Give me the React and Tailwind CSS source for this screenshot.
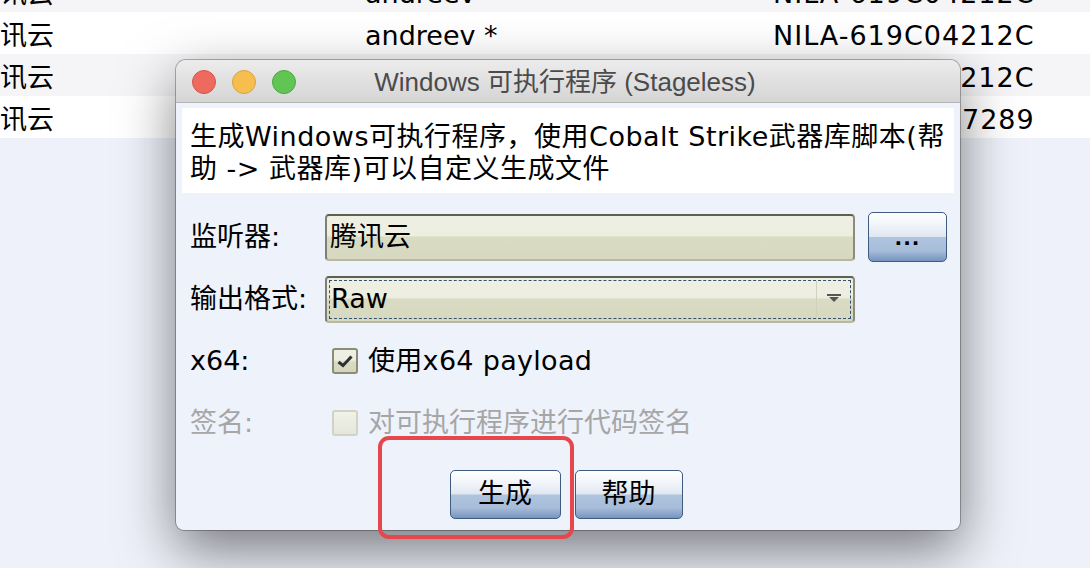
import React from 'react';

const FONT = { fontFamily: '"DejaVu Sans", "Noto Sans CJK SC", sans-serif' };
const TITLE_FONT = { fontFamily: '"Liberation Sans", "Noto Sans CJK SC", sans-serif' };

const rows = [
  { name: '腾讯云', user: 'andreev', host: 'NILA-619C04212C', bg: 'bg-[#f5f5f7]' },
  { name: '腾讯云', user: 'andreev *', host: 'NILA-619C04212C', bg: 'bg-white' },
  { name: '腾讯云', user: 'andreev', host: 'NILA-619C04212C', bg: 'bg-[#f5f5f7]' },
  { name: '腾讯云', user: 'andreev', host: 'DESKTOP-GM7289', bg: 'bg-white' },
];

const fieldBg =
  'bg-[linear-gradient(to_bottom,#eff0e4_0%,#eceee0_45%,#d9dbc3_50%,#d6d8bf_100%)]';
const fieldBorder =
  'border-2 border-t-[#5d604f] border-l-[#7d8070] border-r-[#8a8d7c] border-b-[#b6b8a4] rounded-[4px]';
const blueBtn =
  'border border-[#3f5b80] rounded-[5px] bg-[linear-gradient(to_bottom,#ffffff_0%,#eef2f8_30%,#dfe7f1_49%,#afc4dd_51%,#a7bdd9_78%,#7595bf_100%)]';

const Check = ({ checked, disabled }) => (
  <div
    className={`w-[26px] h-[26px] rounded-[3px] border-2 flex items-center justify-center ${
      disabled
        ? 'border-[#d2d3c6] bg-[linear-gradient(to_bottom,#f1f2e8,#e6e7da)]'
        : 'border-[#8b8d79] bg-[linear-gradient(to_bottom,#eff0e4_0%,#eceee0_45%,#d9dbc3_55%,#d3d5bc_100%)]'
    }`}
  >
    {checked && (
      <svg width="18" height="16" viewBox="0 0 18 16">
        <path d="M2.5 9 L7 12.5 L15.5 3.5" fill="none" stroke="#2f2f2f" strokeWidth="3" />
      </svg>
    )}
  </div>
);

export default function App() {
  return (
    <div className="relative w-[1090px] h-[568px] overflow-hidden bg-[#eef1f9] text-black" style={FONT}>
      {/* table behind */}
      <div className="-mt-[30px]">
        {rows.map((r, i) => (
          <div key={i} className={`h-[42px] flex items-center pt-[7px] text-[27px] whitespace-nowrap ${r.bg}`}>
            <div className="w-[365px] -ml-[27px] shrink-0">{r.name}</div>
            <div className="w-[408px] pl-[27px] shrink-0">{r.user}</div>
            <div className="pl-[27px] tracking-[1px]">{r.host}</div>
          </div>
        ))}
      </div>

      {/* dialog window */}
      <div className="absolute left-[176px] top-[60px] w-[784px] h-[470px] rounded-[10px] rounded-b-[8px] bg-[#eef2fb] shadow-[0_20px_55px_rgba(0,0,0,0.5),0_0_0_1px_rgba(0,0,0,0.28)] flex flex-col overflow-hidden">
        <div className="h-[43px] shrink-0 relative flex items-center justify-center border-b border-[#b4b4b4] bg-[linear-gradient(to_bottom,#ececec,#d5d5d5)]">
          <div className="absolute left-[16px] top-[10px] flex gap-[16px]">
            <span className="w-[24px] h-[24px] rounded-full bg-[#ee6a5f] border border-[#d4544a]" />
            <span className="w-[24px] h-[24px] rounded-full bg-[#f6be4f] border border-[#d9a13b]" />
            <span className="w-[24px] h-[24px] rounded-full bg-[#61c554] border border-[#4ca740]" />
          </div>
          <div className="text-[26px] text-[#4b4b4b] pt-[3px] ml-[-6px]" style={TITLE_FONT}>
            Windows 可执行程序 (Stageless)
          </div>
        </div>

        <div className="flex-1 px-[6px] pt-[5px] flex flex-col">
          <div className="bg-white h-[85px] px-[8px] pt-[13px] text-[27px] leading-[32px] tracking-[0.5px] whitespace-nowrap">
            生成Windows可执行程序，使用Cobalt Strike武器库脚本(帮
            <br />
            助 -&gt; 武器库)可以自定义生成文件
          </div>

          <div className="pl-[8px] mt-[19px] text-[27px]">
            <div className="h-[50px] flex items-center">
              <div className="w-[135px] shrink-0">监听器:</div>
              <div className={`w-[530px] h-[47px] ${fieldBorder} ${fieldBg} flex items-center pl-[3px]`}>
                腾讯云
              </div>
              <div className={`ml-[13px] w-[79px] h-[50px] ${blueBtn} flex items-end justify-center pb-[13px]`}>
                <span className="text-[20px] font-bold leading-none tracking-[1px]">...</span>
              </div>
            </div>

            <div className="h-[50px] mt-[12px] flex items-center">
              <div className="w-[135px] shrink-0">输出格式:</div>
              <div className={`w-[530px] h-[47px] ${fieldBorder} ${fieldBg} p-[2px]`}>
                <div className="h-full border border-dashed border-[#34506f] flex items-center">
                  <div className="flex-1 pl-[1px]">Raw</div>
                  <div className="w-[34px] h-full border-l border-[#cfd1bb] flex items-center justify-center">
                    <svg width="16" height="10" viewBox="0 0 16 10">
                      <rect x="1" y="0" width="14" height="2" fill="#555" />
                      <path d="M3 3 H13 L8 8 Z" fill="#555" />
                    </svg>
                  </div>
                </div>
              </div>
            </div>

            <div className="h-[50px] mt-[12px] flex items-center">
              <div className="w-[142px] shrink-0">x64:</div>
              <Check checked />
              <div className="ml-[10px] tracking-[0.3px]">使用x64 payload</div>
            </div>

            <div className="h-[50px] mt-[12px] flex items-center text-[#a6a6a6]">
              <div className="w-[142px] shrink-0">签名:</div>
              <Check disabled />
              <div className="ml-[10px]">对可执行程序进行代码签名</div>
            </div>
          </div>

          <div className="mt-[22px] flex justify-center gap-[14px] pr-[4px]">
            <div className={`w-[111px] h-[49px] ${blueBtn} flex items-center justify-center text-[27px]`}>
              生成
            </div>
            <div className={`w-[108px] h-[49px] ${blueBtn} flex items-center justify-center text-[27px]`}>
              帮助
            </div>
          </div>
        </div>
      </div>

      {/* red highlight annotation */}
      <div className="absolute left-[378px] top-[436px] w-[196px] h-[103px] border-4 border-[#e5474c] rounded-[11px]" />
    </div>
  );
}
